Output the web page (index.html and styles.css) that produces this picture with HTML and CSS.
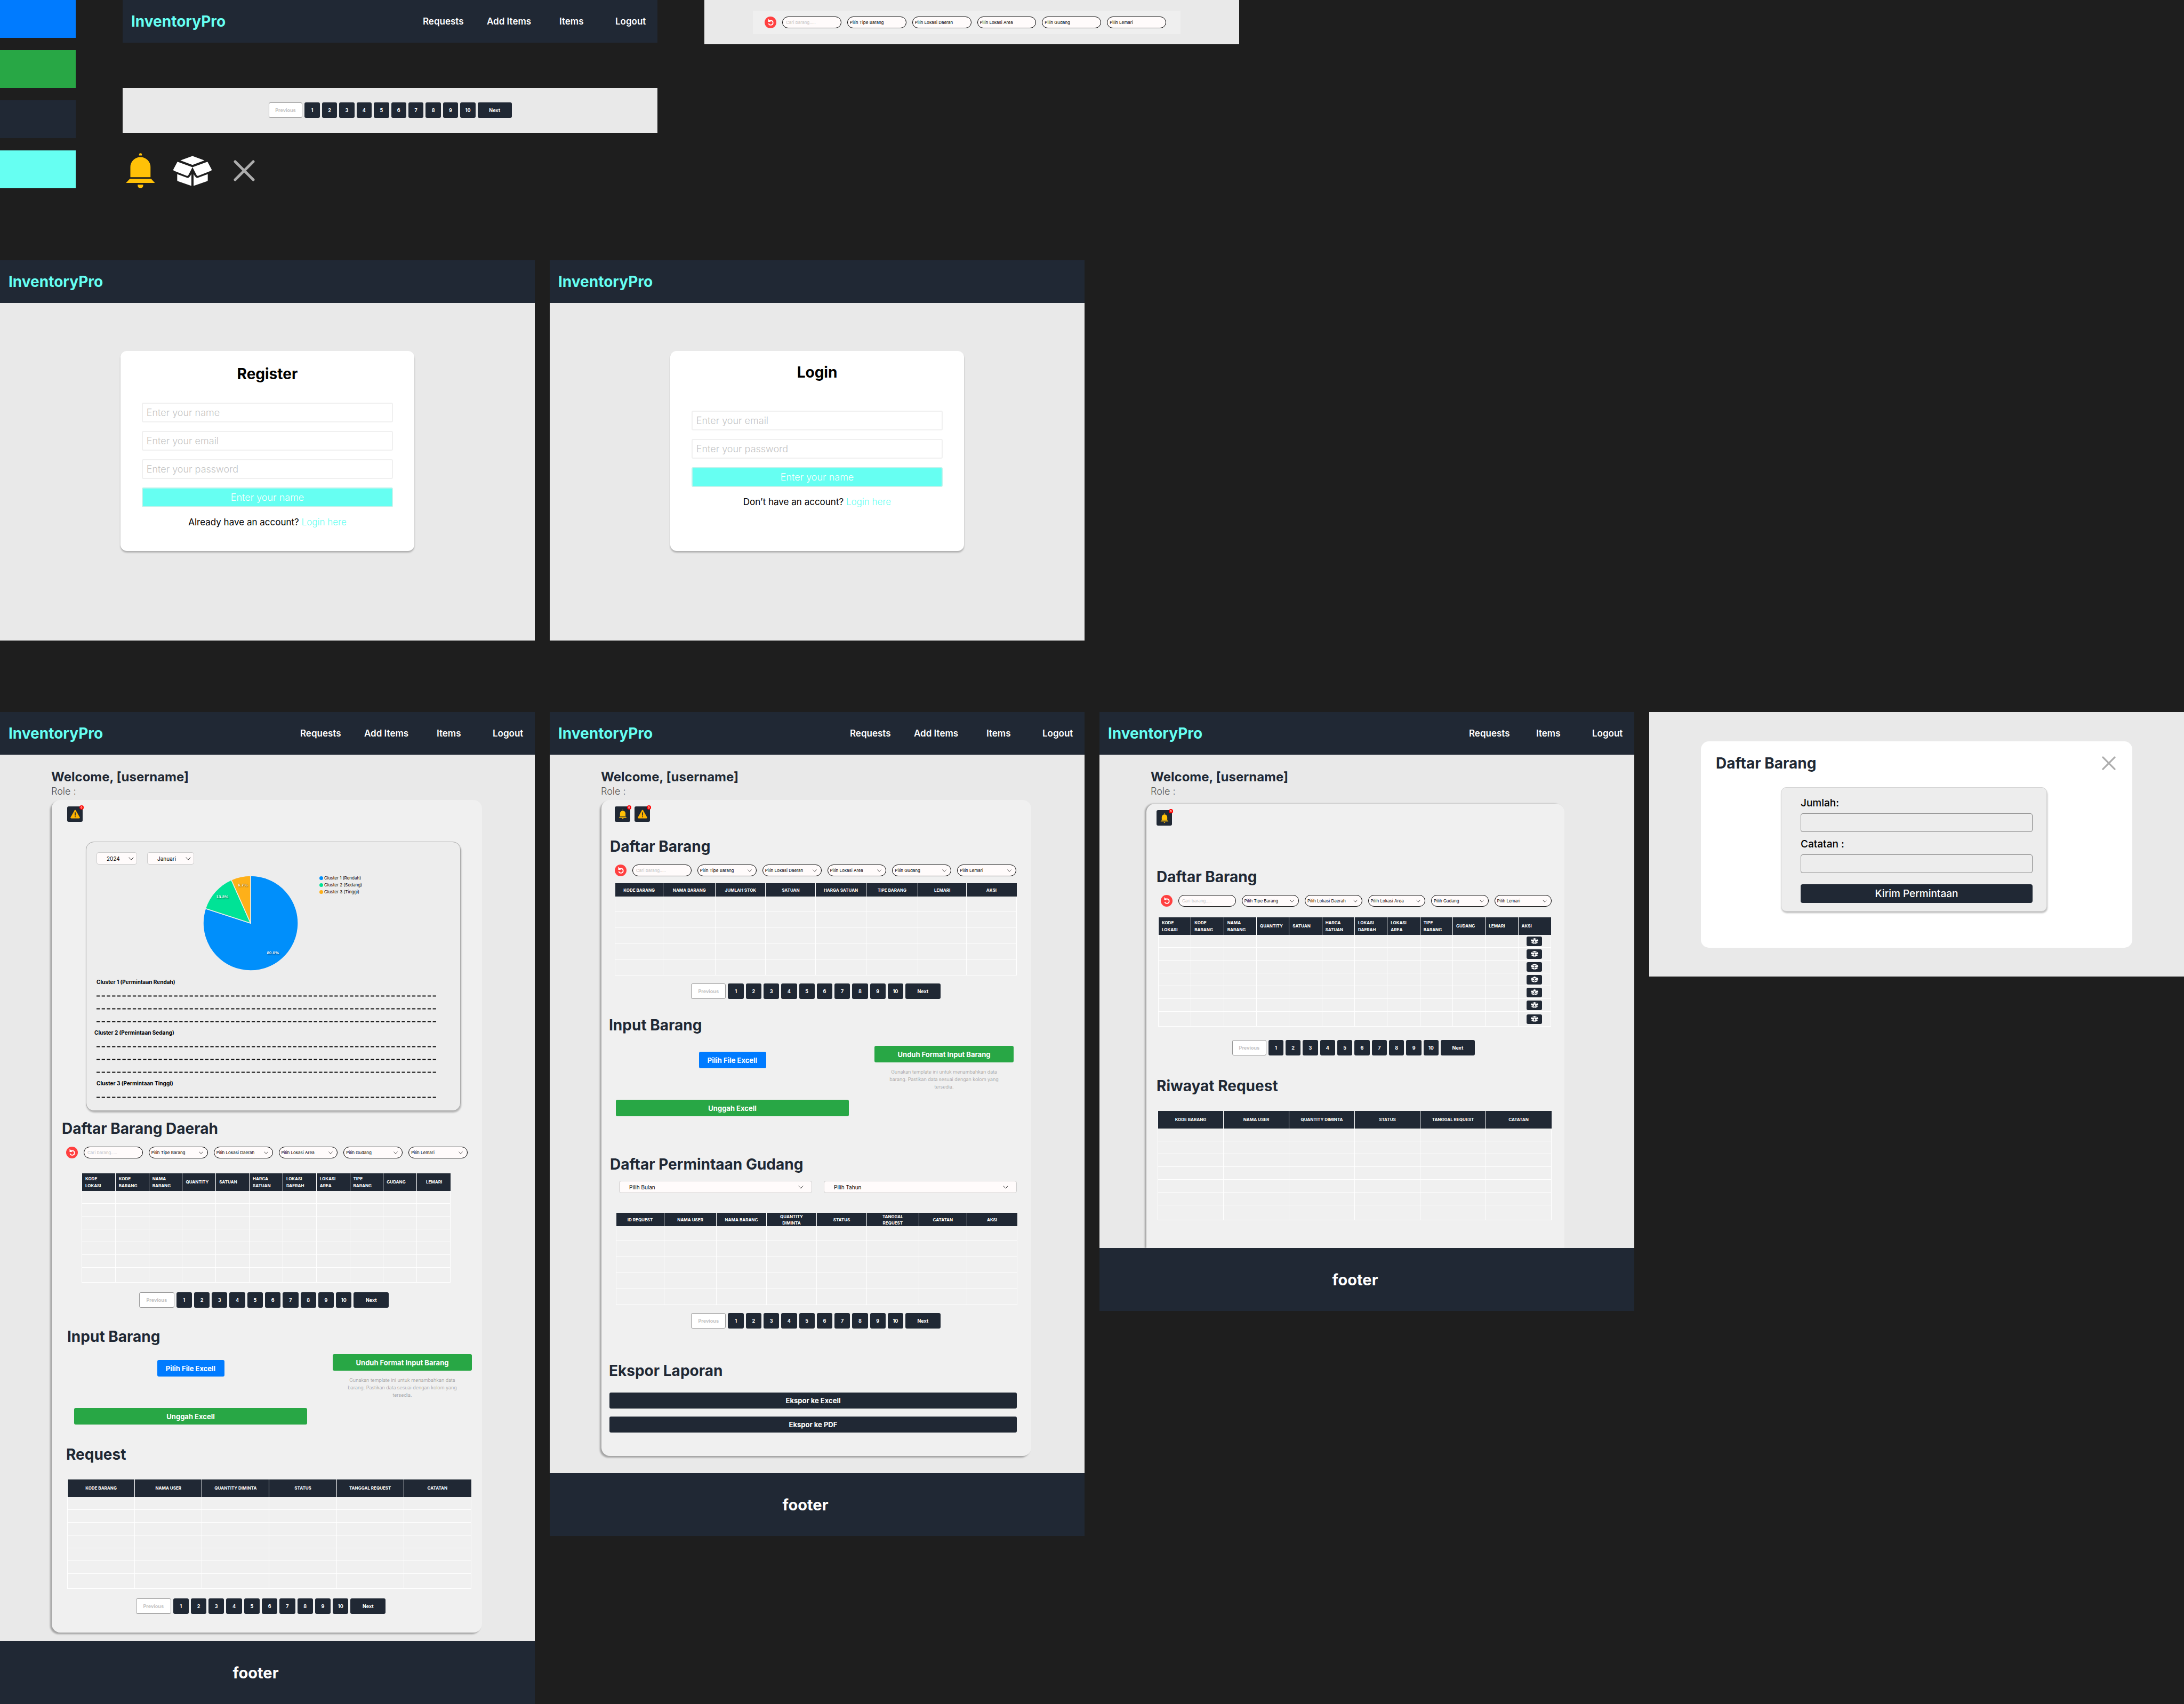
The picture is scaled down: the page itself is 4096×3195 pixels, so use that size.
FILE: index.html
```html
<!DOCTYPE html>
<html lang="id">
<head>
<meta charset="utf-8">
<title>InventoryPro</title>
<link rel="stylesheet" href="styles.css">
</head>
<body>
<svg class="sprite" aria-hidden="true">
  <symbol id="bell" viewBox="0 0 240 288"><path d="M108 20V13a12 12 0 0 1 24 0v7zM37 197v-82a82 82 0 0 1 165 0v82zM33 211h174l31 33H1zM97 258h45v7a22 22 0 0 1-45 0z"/></symbol>
  <symbol id="box" viewBox="0 0 314 246"><path d="M157 1l98 36-98 37-99-37zM37 49l120 44-34 65q-4 8-12 5L6 122q-8-4-5-12l29-55q3-7 7-6zM277 49L157 93l34 65q4 8 12 5l105-41q8-4 5-12l-29-55q-3-7-7-6zM32 149l80 30q14 4 25-12l11-18v96L38 207q-6-2-6-8zM282 149l-80 30q-14 4-25-12l-11-18v96l110-38q6-2 6-8z"/></symbol>
  <symbol id="close" viewBox="0 0 40 40"><path d="M3 3l34 34M37 3L3 37" fill="none" stroke="#adadad" stroke-width="5" stroke-linecap="round"/></symbol>
  <symbol id="warn" viewBox="0 0 20 18"><path d="M8.800 1q1.200-2 2.400 0l8.400 14.600q.900 2.100-1.400 2.200H1.800Q-.500 17.700.400 15.600z" fill="#ffb300"/><path d="M9 5.500h2v6.500H9zM9 13.500h2v2H9z" fill="#202834"/></symbol>
  <symbol id="reset" viewBox="0 0 22 22"><path d="M8 7.500h3.500a4.200 4.200 0 1 1-4 5.500" fill="none" stroke="#fff" stroke-width="1.800"/><path d="M6.500 4v6h5z" fill="#fff"/></symbol>
  <symbol id="dashes" viewBox="0 0 912 4"><path d="M0 2h912" stroke="#111" stroke-width="3" stroke-dasharray="9 4.890"/></symbol>
</svg>

<section class="board kit">
  <div class="swatches">
    <div class="swatch blue"></div><div class="swatch green"></div><div class="swatch navy"></div><div class="swatch aqua"></div>
  </div>
  <div class="kit-col">
    <header class="navbar">
      <a class="logo" href="#">InventoryPro</a>
      <nav class="links"><a href="#">Requests</a><a href="#">Add Items</a><a href="#">Items</a><a href="#">Logout</a></nav>
    </header>
    <div class="kit-pager">
      <nav class="pager"><button class="prev" disabled>Previous</button><button>1</button><button>2</button><button>3</button><button>4</button><button>5</button><button>6</button><button>7</button><button>8</button><button>9</button><button>10</button><button class="next">Next</button></nav>
    </div>
    <div class="kit-icons">
      <svg class="i-bell"><use href="#bell"/></svg>
      <svg class="i-box"><use href="#box"/></svg>
      <svg class="i-close"><use href="#close"/></svg>
    </div>
  </div>
  <div class="kit-filter">
    <form class="filter plain">
      <button type="button" class="reset" aria-label="Reset"><svg><use href="#reset"/></svg></button>
      <input type="text" aria-label="Cari barang" placeholder="Cari barang.....">
      <select aria-label="Tipe"><option>Pilih Tipe Barang</option></select>
      <select aria-label="Daerah"><option>Pilih Lokasi Daerah</option></select>
      <select aria-label="Area"><option>Pilih Lokasi Area</option></select>
      <select aria-label="Gudang"><option>Pilih Gudang</option></select>
      <select aria-label="Lemari"><option>Pilih Lemari</option></select>
    </form>
  </div>
</section>

<section class="board">
  <article class="frame auth">
    <header class="navbar"><a class="logo" href="#">InventoryPro</a></header>
    <main>
      <form class="auth-card">
        <h1>Register</h1>
        <input type="text" aria-label="Name" placeholder="Enter your name">
        <input type="email" aria-label="Email" placeholder="Enter your email">
        <input type="password" aria-label="Password" placeholder="Enter your password">
        <button type="button">Enter your name</button>
        <p>Already have an account? <a href="#">Login here</a></p>
      </form>
    </main>
  </article>
  <article class="frame auth">
    <header class="navbar"><a class="logo" href="#">InventoryPro</a></header>
    <main>
      <form class="auth-card login">
        <h1>Login</h1>
        <input type="email" aria-label="Email" placeholder="Enter your email">
        <input type="password" aria-label="Password" placeholder="Enter your password">
        <button type="button">Enter your name</button>
        <p>Don’t have an account? <a href="#">Login here</a></p>
      </form>
    </main>
  </article>
</section>

<section class="board">
  <article class="frame admin">
    <header class="navbar">
      <a class="logo" href="#">InventoryPro</a>
      <nav class="links"><a href="#">Requests</a><a href="#">Add Items</a><a href="#">Items</a><a href="#">Logout</a></nav>
    </header>
    <main>
      <h1>Welcome, [username]</h1>
      <p class="role">Role :</p>
      <div class="panel">
        <div class="alerts"><button aria-label="Peringatan"><svg><use href="#warn"/></svg><span class="badge">0</span></button></div>
        <section class="chart">
          <div class="period">
            <select class="soft year" aria-label="Tahun"><option>2024</option></select>
            <select class="soft month" aria-label="Bulan"><option>Januari</option></select>
          </div>
          <div class="pie-row">
            <svg class="pie" viewBox="-90 -90 180 180">
              <g stroke="#ededed" stroke-width="1.500" stroke-linejoin="round">
                <path d="M0 0V-89A89 89 0 1 1-84.600-27.500z" fill="#008ffb"/>
                <path d="M0 0L-84.600-27.500A89 89 0 0 1-36.200-81.300z" fill="#00e396"/>
                <path d="M0 0L-36.200-81.300A89 89 0 0 1 0-89z" fill="#feb019"/>
              </g>
              <g class="pie-text"><text x="42" y="58">80.0%</text><text x="-53" y="-47">13.3%</text><text x="-15" y="-69">6.7%</text></g>
            </svg>
            <ul class="legend"><li class="c1">Cluster 1 (Rendah)</li><li class="c2">Cluster 2 (Sedang)</li><li class="c3">Cluster 3 (Tinggi)</li></ul>
          </div>
          <h3>Cluster 1 (Permintaan Rendah)</h3>
          <svg class="line"><use href="#dashes"/></svg><svg class="line"><use href="#dashes"/></svg><svg class="line"><use href="#dashes"/></svg>
          <h3 class="out">Cluster 2 (Permintaan Sedang)</h3>
          <svg class="line"><use href="#dashes"/></svg><svg class="line"><use href="#dashes"/></svg><svg class="line"><use href="#dashes"/></svg>
          <h3>Cluster 3 (Permintaan Tinggi)</h3>
          <svg class="line"><use href="#dashes"/></svg>
        </section>
        <h2 class="t-daerah">Daftar Barang Daerah</h2>
        <form class="filter">
          <button type="button" class="reset" aria-label="Reset"><svg><use href="#reset"/></svg></button>
          <input type="text" aria-label="Cari barang" placeholder="Cari barang.....">
          <select aria-label="Tipe"><option>Pilih Tipe Barang</option></select>
          <select aria-label="Daerah"><option>Pilih Lokasi Daerah</option></select>
          <select aria-label="Area"><option>Pilih Lokasi Area</option></select>
          <select aria-label="Gudang"><option>Pilih Gudang</option></select>
          <select aria-label="Lemari"><option>Pilih Lemari</option></select>
        </form>
        <div class="grid g-daerah">
          <table class="left">
            <thead><tr><th>KODE LOKASI<th>KODE BARANG<th>NAMA BARANG<th>QUANTITY<th>SATUAN<th>HARGA SATUAN<th>LOKASI DAERAH<th>LOKASI AREA<th>TIPE BARANG<th>GUDANG<th class="mid">LEMARI</tr></thead>
            <tbody>
              <tr><td><td><td><td><td><td><td><td><td><td><td></tr>
              <tr><td><td><td><td><td><td><td><td><td><td><td></tr>
              <tr><td><td><td><td><td><td><td><td><td><td><td></tr>
              <tr><td><td><td><td><td><td><td><td><td><td><td></tr>
              <tr><td><td><td><td><td><td><td><td><td><td><td></tr>
              <tr><td><td><td><td><td><td><td><td><td><td><td></tr>
              <tr><td><td><td><td><td><td><td><td><td><td><td></tr>
            </tbody>
          </table>
        </div>
        <nav class="pager p1"><button class="prev" disabled>Previous</button><button>1</button><button>2</button><button>3</button><button>4</button><button>5</button><button>6</button><button>7</button><button>8</button><button>9</button><button>10</button><button class="next">Next</button></nav>
        <h2 class="t-input">Input Barang</h2>
        <div class="upload">
          <div class="pick"><button class="btn blue">Pilih File Excell</button><button class="btn green">Unggah Excell</button></div>
          <div class="template"><button class="btn green">Unduh Format Input Barang</button><p>Gunakan template ini untuk menambahkan data barang. Pastikan data sesuai dengan kolom yang tersedia.</p></div>
        </div>
        <h2 class="t-request">Request</h2>
        <div class="grid g-request">
          <table>
            <thead><tr><th>KODE BARANG<th>NAMA USER<th>QUANTITY DIMINTA<th>STATUS<th>TANGGAL REQUEST<th>CATATAN</tr></thead>
            <tbody>
              <tr><td><td><td><td><td><td></tr>
              <tr><td><td><td><td><td><td></tr>
              <tr><td><td><td><td><td><td></tr>
              <tr><td><td><td><td><td><td></tr>
              <tr><td><td><td><td><td><td></tr>
              <tr><td><td><td><td><td><td></tr>
              <tr><td><td><td><td><td><td></tr>
            </tbody>
          </table>
        </div>
        <nav class="pager p2"><button class="prev" disabled>Previous</button><button>1</button><button>2</button><button>3</button><button>4</button><button>5</button><button>6</button><button>7</button><button>8</button><button>9</button><button>10</button><button class="next">Next</button></nav>
      </div>
    </main>
    <footer>footer</footer>
  </article>

  <article class="frame gudang">
    <header class="navbar">
      <a class="logo" href="#">InventoryPro</a>
      <nav class="links"><a href="#">Requests</a><a href="#">Add Items</a><a href="#">Items</a><a href="#">Logout</a></nav>
    </header>
    <main>
      <h1>Welcome, [username]</h1>
      <p class="role">Role :</p>
      <div class="panel">
        <div class="alerts"><button aria-label="Notifikasi"><svg class="gold"><use href="#bell"/></svg><span class="badge">0</span></button><button aria-label="Peringatan"><svg><use href="#warn"/></svg><span class="badge">0</span></button></div>
        <h2 class="t-daftar">Daftar Barang</h2>
        <form class="filter">
          <button type="button" class="reset" aria-label="Reset"><svg><use href="#reset"/></svg></button>
          <input type="text" aria-label="Cari barang" placeholder="Cari barang.....">
          <select aria-label="Tipe"><option>Pilih Tipe Barang</option></select>
          <select aria-label="Daerah"><option>Pilih Lokasi Daerah</option></select>
          <select aria-label="Area"><option>Pilih Lokasi Area</option></select>
          <select aria-label="Gudang"><option>Pilih Gudang</option></select>
          <select aria-label="Lemari"><option>Pilih Lemari</option></select>
        </form>
        <div class="grid tall g-daftar">
          <table>
            <colgroup><col class="w1"><col class="w2"><col class="w3"><col class="w4"><col class="w3"><col class="w2"><col class="w1"><col class="w3"></colgroup>
            <thead><tr><th>KODE BARANG<th>NAMA BARANG<th>JUMLAH STOK<th>SATUAN<th>HARGA SATUAN<th>TIPE BARANG<th>LEMARI<th>AKSI</tr></thead>
            <tbody>
              <tr><td><td><td><td><td><td><td><td></tr>
              <tr><td><td><td><td><td><td><td><td></tr>
              <tr><td><td><td><td><td><td><td><td></tr>
              <tr><td><td><td><td><td><td><td><td></tr>
              <tr><td><td><td><td><td><td><td><td></tr>
            </tbody>
          </table>
        </div>
        <nav class="pager"><button class="prev" disabled>Previous</button><button>1</button><button>2</button><button>3</button><button>4</button><button>5</button><button>6</button><button>7</button><button>8</button><button>9</button><button>10</button><button class="next">Next</button></nav>
        <h2 class="t-input">Input Barang</h2>
        <div class="upload">
          <div class="pick"><button class="btn blue">Pilih File Excell</button><button class="btn green">Unggah Excell</button></div>
          <div class="template"><button class="btn green">Unduh Format Input Barang</button><p>Gunakan template ini untuk menambahkan data barang. Pastikan data sesuai dengan kolom yang tersedia.</p></div>
        </div>
        <h2 class="t-permintaan">Daftar Permintaan Gudang</h2>
        <div class="when">
          <select class="soft" aria-label="Bulan"><option>Pilih Bulan</option></select>
          <select class="soft" aria-label="Tahun"><option>Pilih Tahun</option></select>
        </div>
        <div class="grid tall g-permintaan">
          <table>
            <colgroup><col class="w1"><col class="w2"><col class="w3"><col class="w4"><col class="w3"><col class="w2"><col class="w1"><col class="w3"></colgroup>
            <thead><tr><th>ID REQUEST<th>NAMA USER<th>NAMA BARANG<th>QUANTITY<br>DIMINTA<th>STATUS<th>TANGGAL<br>REQUEST<th>CATATAN<th>AKSI</tr></thead>
            <tbody>
              <tr><td><td><td><td><td><td><td><td></tr>
              <tr><td><td><td><td><td><td><td><td></tr>
              <tr><td><td><td><td><td><td><td><td></tr>
              <tr><td><td><td><td><td><td><td><td></tr>
              <tr><td><td><td><td><td><td><td><td></tr>
            </tbody>
          </table>
        </div>
        <nav class="pager"><button class="prev" disabled>Previous</button><button>1</button><button>2</button><button>3</button><button>4</button><button>5</button><button>6</button><button>7</button><button>8</button><button>9</button><button>10</button><button class="next">Next</button></nav>
        <h2 class="t-ekspor">Ekspor Laporan</h2>
        <div class="export"><button class="btn navy">Ekspor ke Excell</button><button class="btn navy">Ekspor ke PDF</button></div>
      </div>
    </main>
    <footer>footer</footer>
  </article>

  <article class="frame user">
    <header class="navbar">
      <a class="logo" href="#">InventoryPro</a>
      <nav class="links short"><a href="#">Requests</a><a href="#">Items</a><a href="#">Logout</a></nav>
    </header>
    <main>
      <h1>Welcome, [username]</h1>
      <p class="role">Role :</p>
      <div class="panel">
        <div class="alerts"><button aria-label="Notifikasi"><svg class="gold"><use href="#bell"/></svg><span class="badge">0</span></button></div>
        <h2 class="t-daftar">Daftar Barang</h2>
        <form class="filter">
          <button type="button" class="reset" aria-label="Reset"><svg><use href="#reset"/></svg></button>
          <input type="text" aria-label="Cari barang" placeholder="Cari barang.....">
          <select aria-label="Tipe"><option>Pilih Tipe Barang</option></select>
          <select aria-label="Daerah"><option>Pilih Lokasi Daerah</option></select>
          <select aria-label="Area"><option>Pilih Lokasi Area</option></select>
          <select aria-label="Gudang"><option>Pilih Gudang</option></select>
          <select aria-label="Lemari"><option>Pilih Lemari</option></select>
        </form>
        <div class="grid g-daftar">
          <table class="left">
            <thead><tr><th>KODE LOKASI<th>KODE BARANG<th>NAMA BARANG<th>QUANTITY<th>SATUAN<th>HARGA SATUAN<th>LOKASI DAERAH<th>LOKASI AREA<th>TIPE BARANG<th>GUDANG<th>LEMARI<th>AKSI</tr></thead>
            <tbody>
              <tr><td><td><td><td><td><td><td><td><td><td><td><td><button class="take" aria-label="Ambil"><svg><use href="#box"/></svg></button></tr>
              <tr><td><td><td><td><td><td><td><td><td><td><td><td><button class="take" aria-label="Ambil"><svg><use href="#box"/></svg></button></tr>
              <tr><td><td><td><td><td><td><td><td><td><td><td><td><button class="take" aria-label="Ambil"><svg><use href="#box"/></svg></button></tr>
              <tr><td><td><td><td><td><td><td><td><td><td><td><td><button class="take" aria-label="Ambil"><svg><use href="#box"/></svg></button></tr>
              <tr><td><td><td><td><td><td><td><td><td><td><td><td><button class="take" aria-label="Ambil"><svg><use href="#box"/></svg></button></tr>
              <tr><td><td><td><td><td><td><td><td><td><td><td><td><button class="take" aria-label="Ambil"><svg><use href="#box"/></svg></button></tr>
              <tr><td><td><td><td><td><td><td><td><td><td><td><td><button class="take" aria-label="Ambil"><svg><use href="#box"/></svg></button></tr>
            </tbody>
          </table>
        </div>
        <nav class="pager"><button class="prev" disabled>Previous</button><button>1</button><button>2</button><button>3</button><button>4</button><button>5</button><button>6</button><button>7</button><button>8</button><button>9</button><button>10</button><button class="next">Next</button></nav>
        <h2 class="t-riwayat">Riwayat Request</h2>
        <div class="grid g-riwayat">
          <table>
            <thead><tr><th>KODE BARANG<th>NAMA USER<th>QUANTITY DIMINTA<th>STATUS<th>TANGGAL REQUEST<th>CATATAN</tr></thead>
            <tbody>
              <tr><td><td><td><td><td><td></tr>
              <tr><td><td><td><td><td><td></tr>
              <tr><td><td><td><td><td><td></tr>
              <tr><td><td><td><td><td><td></tr>
              <tr><td><td><td><td><td><td></tr>
              <tr><td><td><td><td><td><td></tr>
              <tr><td><td><td><td><td><td></tr>
            </tbody>
          </table>
        </div>
      </div>
    </main>
    <footer>footer</footer>
  </article>

  <article class="frame dialog-frame">
    <div class="dialog" role="dialog" aria-label="Daftar Barang">
      <div class="dialog-head"><h2>Daftar Barang</h2><button class="x" aria-label="Tutup"><svg><use href="#close"/></svg></button></div>
      <form class="request">
        <label for="jumlah">Jumlah:</label><input id="jumlah" type="text">
        <label for="catatan">Catatan :</label><input id="catatan" type="text">
        <button type="button">Kirim Permintaan</button>
      </form>
    </div>
  </article>
</section>
</body>
</html>
```
FILE: styles.css
```css
:root { --navy: #202834; --aqua: #66fff2; --blue: #007bff; --green: #28a745; --page: #e9e9e9; --panel: #f0f0f0; --field: #fffbfb; }
* { box-sizing: border-box; margin: 0; padding: 0; }
body { background: #1e1e1e; font-family: Inter, "Open Sans", sans-serif; color: #000; display: flex; flex-direction: column; gap: 134px; }
button, input, select { font: inherit; color: inherit; border: 0; appearance: none; }
a { text-decoration: none; color: inherit; }
.sprite { display: none; }
.blue { background: var(--blue); }
.green { background: var(--green); }
.navy { background: var(--navy); }
.aqua { background: var(--aqua); }

.board { display: grid; grid-template-columns: repeat(4, 1fr); gap: 28px; align-items: start; }
.frame { background: var(--page); }

/* component kit */
.board.kit { display: flex; gap: 88px; }
.swatches { width: 142px; display: grid; gap: 23px; }
.swatch { height: 71px; }
.kit-col, .kit-filter { flex: 0 0 calc((100% - 84px) / 4); }
.kit-pager { background: var(--page); margin-top: 85px; padding: 27px 0 28px; display: flex; justify-content: center; }
.kit-pager .pager { width: 456px; }
.kit-icons { margin-top: 37px; padding: 0 6px; height: 68px; display: flex; align-items: center; }
.i-bell { width: 55px; height: 66px; fill: #ffc107; }
.i-box { width: 72px; height: 57px; fill: #fff; margin-left: 34px; }
.i-close { width: 40px; height: 40px; margin-left: 41px; }
.kit-filter { background: var(--page); padding: 20px 110px 19px 91px; }
.kit-filter .filter { background: #efefef; padding: 11px 27px 11px 22px; }

/* navigation bar */
.navbar { height: 80px; background: var(--navy); padding: 0 21px 0 16px; display: flex; align-items: center; justify-content: space-between; }
.logo { font-size: 28px; font-weight: 700; color: var(--aqua); }
.links { display: grid; grid-template-columns: 120px 136px 105px 58px; font-size: 17px; font-weight: 600; color: #fff; white-space: nowrap; }
.links.short { grid-template-columns: 126px 105px 58px; }

/* register and login */
.auth > main { padding: 90px 0 168px; }
.auth-card { width: 55%; margin: 0 auto; padding: 25px 40px 42px; background: #fff; border-radius: 12px; box-shadow: 0 3px 3px rgba(0,0,0,.25); display: grid; gap: 16px; font-size: 17px; }
.auth-card.login { padding: 22px 40px 80px; }
.auth-card h1 { font-size: 28px; font-weight: 700; line-height: 36px; text-align: center; margin-bottom: 20px; }
.auth-card.login h1 { margin-bottom: 38px; }
.auth-card input, .auth-card button { height: 37px; border: 2px solid #f0f0f0; border-radius: 3px; padding: 0 7px; background: #fff; min-width: 0; font-size: 18px; }
.auth-card input::placeholder { color: #c4c4c4; font-weight: 300; }
.auth-card button { background: var(--aqua); border-color: #c0f3ec; color: #fff; font-weight: 300; }
.auth-card p { line-height: 24px; text-align: center; }
.auth-card a { color: var(--aqua); font-weight: 300; }

/* dashboards */
.admin > main, .gudang > main, .user > main { padding-top: 27px; }
.frame h1, .frame h2 { color: var(--navy); font-weight: 700; }
.frame.auth h1 { color: #000; }
main > h1 { font-size: 24px; line-height: 30px; margin-left: 96px; }
.role { font-size: 18px; line-height: 24px; font-weight: 300; color: #555; margin: 0 96px 4px; }
.frame h2 { font-size: 28px; line-height: 36px; }
.panel { background: var(--panel); border-radius: 16px; padding-top: 12px; box-shadow: -3px 3px 3px rgba(0,0,0,.3); }
.alerts { display: flex; gap: 8px; }
.alerts button { position: relative; width: 29px; height: 29px; border-radius: 3px; background: var(--navy); display: grid; place-items: center; }
.alerts svg { width: 18px; height: 17px; }
.alerts .gold { height: 18px; fill: #ffc107; }
.badge { position: absolute; top: -2px; right: -2px; width: 8px; height: 8px; border-radius: 50%; background: red; color: #fff; font-size: 5px; font-weight: 700; line-height: 8px; text-align: center; }
footer { height: 118px; background: var(--navy); color: #fff; font-size: 29px; font-weight: 700; display: flex; align-items: center; justify-content: center; padding-right: 44px; }

.filter { display: grid; grid-template-columns: 22px repeat(6, 1fr); gap: 11px; }
.filter input, .filter select { height: 22px; min-width: 0; border: 1px solid #000; border-radius: 11px; background: var(--field); font-size: 8px; padding: 0 4px; }
.filter input { padding: 0 6px; }
.filter input::placeholder { color: #c4c4c4; }
.filter .reset { width: 22px; height: 22px; border-radius: 50%; background: #ff4040; display: block; }
.reset svg { width: 22px; height: 22px; display: block; }
.frame select { background: var(--field) url("data:image/svg+xml,%3Csvg xmlns='http://www.w3.org/2000/svg' viewBox='0 0 8 5'%3E%3Cpath d='M.5.5L4 4.300 7.500.5' fill='none' stroke='%23000' stroke-width='.7'/%3E%3C/svg%3E") no-repeat right 8px center / 8px 5px; }
.frame select.soft { height: 23px; border: 1px solid #ccc; border-radius: 4px; font-size: 10px; padding: 0 18px; background-position: right 15px center; background-size: 10px 6px; }

.grid table { width: 100%; table-layout: fixed; border-collapse: separate; border-spacing: 0; border-left: 1px solid #fff; }
.grid th { height: 33px; background: var(--navy); color: #fff; font-size: 8px; font-weight: 700; line-height: 13px; border-right: 1px solid #fff; vertical-align: middle; text-align: center; }
.grid th:last-child { border-right-color: var(--navy); }
.grid .left th { text-align: left; padding: 0 4px 0 6px; }
.grid .left .mid { text-align: center; }
.grid td { height: 24px; border-right: 1px solid #fff; border-bottom: 1px solid #fff; text-align: center; line-height: 0; }
.grid tr:last-child td { height: 28px; }
.grid.tall th { height: 25px; line-height: 12px; }
.grid.tall tbody td { height: 30px; }
.grid.tall tbody tr:first-child td { height: 28px; }
.w1 { width: 12%; } .w2 { width: 13%; } .w3 { width: 12.5%; } .w4 { width: 12.5%; }
.take { width: 29px; height: 18px; border-radius: 3px; background: var(--navy); display: inline-grid; place-items: center; }
.take svg { width: 14px; height: 11px; fill: #fff; }

.pager { display: flex; gap: 4px; width: 58%; }
.pager button { flex: 1; min-width: 0; height: 29px; border-radius: 3px; background: var(--navy); color: #fff; font-size: 9px; font-weight: 700; text-align: center; }
.pager .prev, .pager .next { flex: 0 0 14%; }
.pager .prev { background: #fff; color: #c4c4c4; border: 1px solid #999; }

.btn { height: 31px; border-radius: 3px; color: #fff; font-size: 13px; font-weight: 700; }
.upload { display: grid; grid-template-columns: 1fr 261px; gap: 48px; }
.pick { display: flex; flex-direction: column; padding-top: 11px; gap: 59px; }
.pick .blue { width: 126px; align-self: center; }
.template .btn { width: 100%; }
.template p { font-size: 9px; line-height: 14px; font-weight: 300; color: #999; text-align: center; padding: 11px 16px 0; }

/* admin dashboard */
.admin .panel { margin: 0 99px 16px 97px; padding-bottom: 35px; }
.admin .alerts { margin-left: 29px; }
.chart { margin: 37px 40px 0 64px; border: 1px solid #aaa; border-radius: 15px; background: #ededed; box-shadow: 1px 3px 3px rgba(0,0,0,.25); padding: 19px 45px 23px 19px; }
.period { display: flex; gap: 19px; }
.frame .period .soft { background-position: right 5px center; }
.year { width: 76px; }
.month { width: 88px; }
.pie-row { display: flex; margin-top: 20px; padding-left: 199px; }
.pie { width: 180px; height: 180px; }
.pie-text { font: bold 8px "Liberation Sans", sans-serif; fill: #fff; text-anchor: middle; filter: drop-shadow(1px 1px 1px rgba(0,0,0,.5)); }
.legend { list-style: none; font-size: 8px; line-height: 13px; margin: -1px 0 0 39px; }
.legend li::before { content: ""; display: inline-block; width: 7px; height: 7px; border-radius: 50%; margin-right: 2px; vertical-align: -1px; }
.c1::before { background: #008ffb; } .c2::before { background: #00e396; } .c3::before { background: #feb019; }
.chart h3 { font-size: 10px; font-weight: 700; line-height: 16px; margin: 12px 0 17px; }
.chart h3.out { margin-left: -4px; }
.line { display: block; width: 100%; height: 3px; margin-bottom: 21px; }
.line + h3 { margin-top: -10px; }
.line:last-child { margin-bottom: 0; }
.t-daerah { margin: 15px 0 16px 19px; }
.admin .filter { margin: 0 27px; }
.g-daerah { margin: 28px 59px 18px 56px; }
.admin .p1 { margin-left: 164px; }
.admin .p2 { margin-left: 158px; }
.admin .t-input { margin: 36px 0 15px 29px; }
.admin .upload { margin: 0 19px 0 42px; }
.t-request { margin: 38px 0 29px 27px; }
.g-request { margin: 0 20px 18px 29px; }

/* warehouse dashboard */
.gudang .panel { margin: 0 100px 32px 97px; padding-bottom: 44px; }
.gudang .alerts { margin-left: 25px; }
.gudang .t-daftar { margin: 28px 0 16px 16px; }
.gudang .filter { margin: 0 28px 0 25px; }
.gudang .g-daftar { margin: 13px 27px 15px 25px; }
.gudang .pager { margin-left: 168px; }
.gudang .t-input { margin: 31px 0 21px 14px; }
.gudang .upload { margin: 0 33px 0 27px; }
.t-permintaan { margin: 72px 0 13px 16px; }
.when { display: grid; grid-template-columns: 1fr 1fr; gap: 22px; margin: 0 27px 0 33px; }
.g-permintaan { margin: 37px 26px 15px 27px; }
.t-ekspor { margin: 61px 0 23px 14px; }
.export { display: grid; gap: 15px; margin: 0 27px 0 15px; }
.export .btn { height: 30px; }

/* user dashboard */
.user .role { margin-bottom: 11px; }
.user .panel { margin: 0 131px 0 88px; padding-bottom: 52px; border-radius: 16px 16px 0 0; box-shadow: -3px 0 3px rgba(0,0,0,.3); }
.user .alerts { margin-left: 19px; }
.user .t-daftar { margin: 78px 0 16px 19px; }
.user .filter { margin: 0 24px 0 27px; }
.user .g-daftar { margin: 20px 25px 25px 22px; }
.user .pager { margin-left: 161px; }
.t-riwayat { margin: 39px 0 29px 19px; }
.g-riwayat { margin: 0 24px 0 21px; }
.user footer { position: relative; }

/* request dialog */
.dialog-frame { padding: 55px 97px 54px; }
.dialog { background: #fff; border-radius: 15px; padding: 23px 31px 68px 28px; }
.dialog-head { display: flex; justify-content: space-between; align-items: center; }
.x { width: 26px; height: 26px; background: none; }
.x svg { width: 26px; height: 26px; display: block; }
.request { margin: 27px 129px 0 122px; padding: 17px 26px 15px 36px; border: 1px solid #d4d4d4; border-radius: 10px; background: #ededed; box-shadow: 1px 3px 3px rgba(0,0,0,.25); display: flex; flex-direction: column; font-size: 19px; }
.request label { line-height: 24px; font-weight: 500; margin-bottom: 7px; }
.request input { height: 35px; border: 1px solid #888; border-radius: 4px; background: none; margin-bottom: 11px; padding: 0 8px; }
.request button { height: 35px; margin-top: 10px; border-radius: 4px; background: var(--navy); color: #fff; font-weight: 500; }
```
